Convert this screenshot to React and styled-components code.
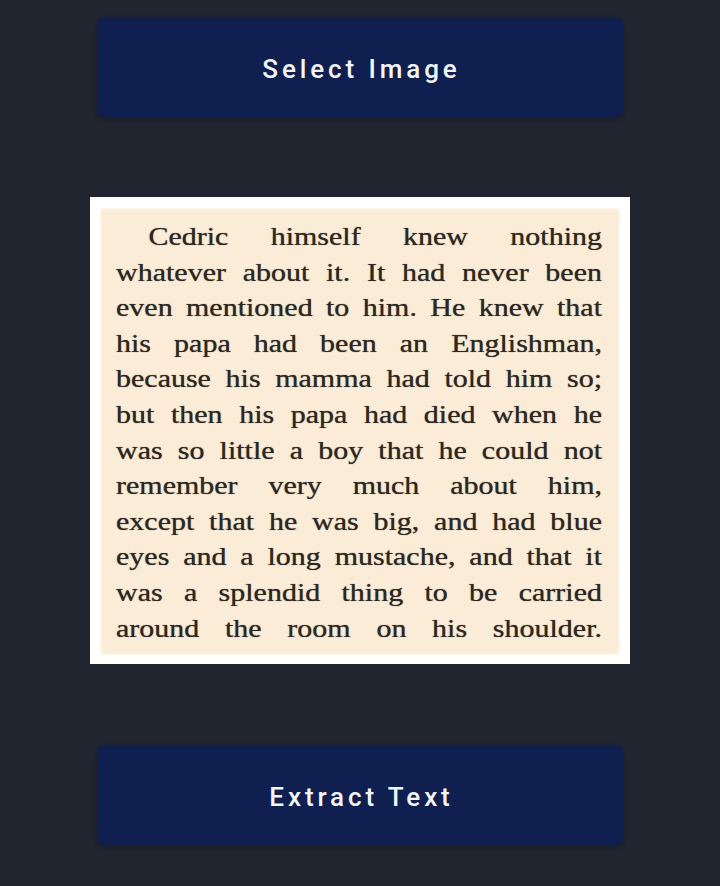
import React from 'react'
import styled, { createGlobalStyle } from 'styled-components'

const GlobalStyle = createGlobalStyle`
  html, body {
    margin: 0;
    padding: 0;
    background: #21252f;
  }
  body {
    font-family: Roboto, "Liberation Sans", sans-serif;
  }
`

const lines = [
  'Cedric himself knew nothing',
  'whatever about it. It had never been',
  'even mentioned to him. He knew that',
  'his papa had been an Englishman,',
  'because his mamma had told him so;',
  'but then his papa had died when he',
  'was so little a boy that he could not',
  'remember very much about him,',
  'except that he was big, and had blue',
  'eyes and a long mustache, and that it',
  'was a splendid thing to be carried',
  'around the room on his shoulder.',
]

const Screen = styled.main`
  min-height: 886px;
  display: flex;
  flex-direction: column;
  align-items: center;
  padding-top: 17px;
  box-sizing: border-box;
`

const ActionButton = styled.button`
  width: 526px;
  height: 100px;
  border: 0;
  border-radius: 7px;
  background: #0f1f50;
  color: #f4f5f8;
  font-family: Roboto, "Liberation Sans", sans-serif;
  font-size: 26px;
  font-weight: 500;
  letter-spacing: 3.9px;
  padding: 4px 0 0 3px;
  box-shadow: 0 2px 4px rgba(0, 0, 0, 0.25);
  cursor: pointer;
  margin-top: ${p => p.$gap || 0}px;
`

const Photo = styled.figure`
  margin: 80px 0 0;
  width: 540px;
  height: 467px;
  box-sizing: border-box;
  background: #ffffff;
  padding: 11px 10px 9px 10px;
`

const Page = styled.div`
  height: 100%;
  box-sizing: border-box;
  background: #faecd7;
  box-shadow: inset 0 0 3px 1px rgba(255, 255, 255, 0.8);
  padding: 11px 18px 0 16px;
  overflow: hidden;
`

/* the scanned page text is wider than plain Times, so stretch it */
const Print = styled.div`
  width: 405px;
  transform: scaleX(1.2);
  transform-origin: left top;
  font-family: "Liberation Serif", "Times New Roman", serif;
  font-size: 25px;
  line-height: 35.6px;
  color: #2d2722;
  text-shadow: 0 0 0.8px rgba(45, 39, 34, 0.8);
`

const Line = styled.span`
  display: block;
  text-align: justify;
  text-align-last: justify;
  white-space: nowrap;
  text-indent: ${p => (p.$first ? '27px' : '0')};
`

export default function App() {
  return (
    <>
      <GlobalStyle />
      <Screen>
        <ActionButton>Select Image</ActionButton>
        <Photo>
          <Page>
            <Print>
              {lines.map((l, i) => (
                <Line key={i} $first={i === 0}>{l}</Line>
              ))}
            </Print>
          </Page>
        </Photo>
        <ActionButton $gap={81}>Extract Text</ActionButton>
      </Screen>
    </>
  )
}
